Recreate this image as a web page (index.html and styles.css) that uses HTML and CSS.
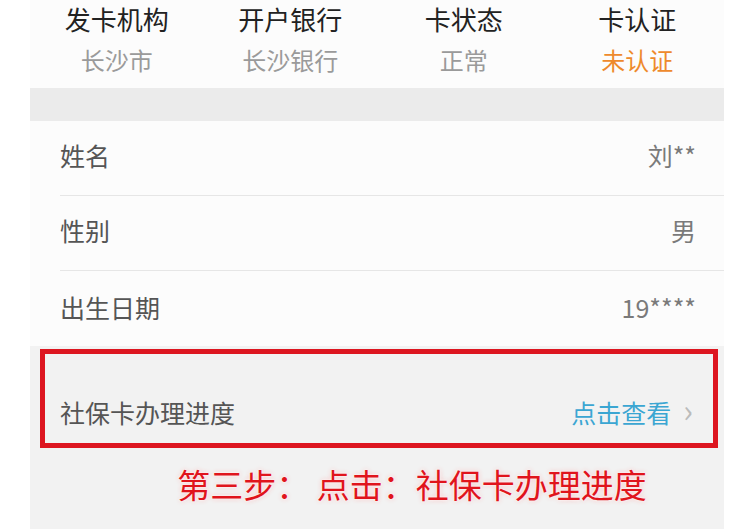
FILE: index.html
```html
<!DOCTYPE html>
<html>
<head>
  <title>社保卡信息</title>
  <link rel="stylesheet" href="styles.css">
</head>
<body>
  <div class="phone">
    <div class="summary">
      <div class="cell">
        <div class="label">发卡机构</div>
        <div class="value">长沙市</div>
      </div>
      <div class="cell">
        <div class="label">开户银行</div>
        <div class="value">长沙银行</div>
      </div>
      <div class="cell">
        <div class="label">卡状态</div>
        <div class="value">正常</div>
      </div>
      <div class="cell">
        <div class="label">卡认证</div>
        <div class="value warn">未认证</div>
      </div>
    </div>

    <div class="band"></div>

    <div class="info">
      <div class="row"><span>姓名</span><span class="val">刘**</span></div>
      <div class="row"><span>性别</span><span class="val">男</span></div>
      <div class="row last"><span>出生日期</span><span class="val">19****</span></div>
    </div>

    <div class="progress">
      <div class="mark">
        <span>社保卡办理进度</span>
        <span class="link">点击查看<span class="chev">&#8250;</span></span>
      </div>
      <p class="caption">第三步： 点击：社保卡办理进度</p>
    </div>
  </div>
</body>
</html>
```

FILE: styles.css
```css
body {
  margin: 0;
  background: #fff;
  font-family: "Noto Sans CJK SC", "Noto Sans", sans-serif;
  overflow: hidden;
}

.phone {
  margin-left: 30px;
  width: 694px;
  height: 529px;
  background: #f2f2f2;
}

.summary {
  display: grid;
  grid-template-columns: repeat(4, 1fr);
  background: #fcfcfc;
  height: 88px;
}

.cell {
  text-align: center;
}

.label {
  font-size: 26px;
  line-height: 37px;
  color: #222;
}

.value {
  font-size: 24px;
  line-height: 32px;
  margin-top: 7px;
  color: #9a9a9a;
}

.warn {
  color: #ee8a2c;
}

.band {
  height: 33px;
  background: #ebebeb;
}

.info {
  background: #fcfcfc;
}

.row {
  display: flex;
  justify-content: space-between;
  align-items: center;
  box-sizing: border-box;
  height: 75px;
  margin-left: 30px;
  padding: 0 28px 6px 0;
  font-size: 25px;
  color: #555;
  border-bottom: 1px solid #e6e6e6;
}

.row.last {
  border-bottom: none;
  padding-bottom: 4px;
}

.val {
  color: #7a7a7a;
}

.progress {
  padding-top: 3px;
}

.mark {
  display: flex;
  justify-content: space-between;
  align-items: flex-end;
  box-sizing: border-box;
  margin-left: 10px;
  margin-right: 6px;
  height: 99px;
  border: 5px solid #dd1620;
  padding: 0 20px 13px 15px;
  font-size: 25px;
  line-height: 36px;
  color: #555;
}

.link {
  color: #3ba6d2;
}

.chev {
  color: #bbb;
  font-size: 32px;
  margin-left: 12px;
}

.caption {
  margin: 14px 0 0;
  text-align: center;
  padding-left: 70px;
  font-size: 33px;
  line-height: 44px;
  color: #e0141c;
  text-shadow: 0 0 3px #fff, 0 0 5px #f7b3b3, 0 0 2px #fff;
}
```
